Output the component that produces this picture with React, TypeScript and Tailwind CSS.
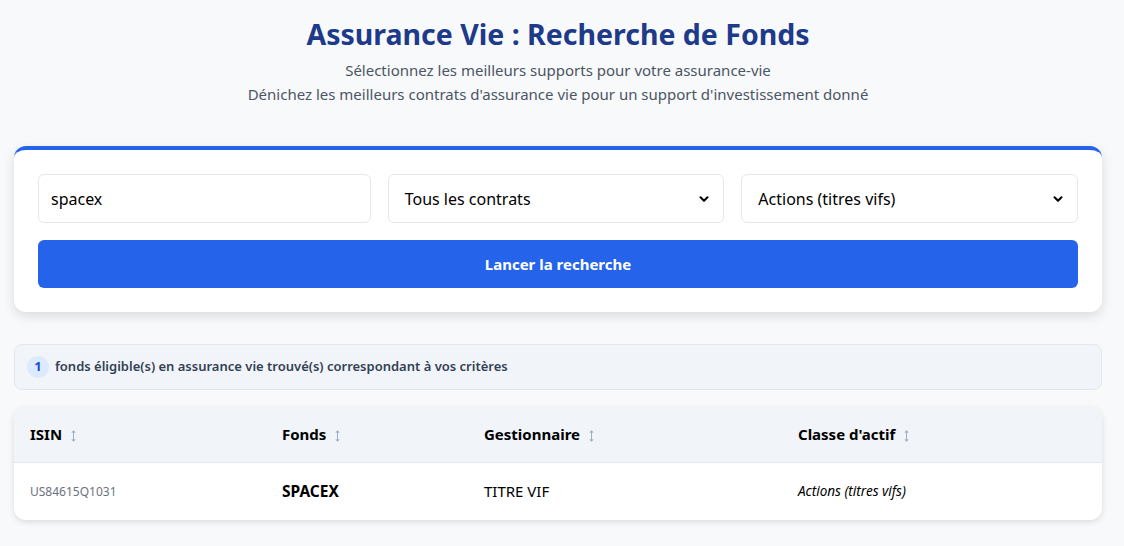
import { ChevronDown } from "lucide-react";

const font = { fontFamily: '"Noto Sans", "Open Sans", sans-serif' };

function SortIcon() {
  return (
    <svg viewBox="0 0 8 14" className="ml-2 inline-block h-[12px] w-[7px] text-[#a0aec0]" fill="none" stroke="currentColor" strokeWidth="1.2">
      <path d="M4 1v12M2 3l2-2 2 2M2 11l2 2 2-2" />
    </svg>
  );
}

function Select({ label }: { label: string }) {
  return (
    <div className="flex h-[49px] min-w-0 flex-1 basis-0 items-center justify-between rounded-md border border-[#e5e7eb] bg-white pl-[16px] pr-[12px] text-[16px] text-black">
      <span>{label}</span>
      <ChevronDown className="h-[14px] w-[14px]" strokeWidth={3.5} />
    </div>
  );
}

export default function App() {
  return (
    <div className="min-h-[546px] bg-[#f8f9fb]" style={font}>
      <div className="ml-[14px] w-[1088px] pt-[14px]">
        <h1 className="text-center text-[28.5px] font-bold leading-[40px] text-[#1e3a8a]">
          Assurance Vie : Recherche de Fonds
        </h1>
        <p className="mt-[4px] text-center text-[15px] leading-[24px] text-[#4b5563]">
          Sélectionnez les meilleurs supports pour votre assurance-vie
          <br />
          Dénichez les meilleurs contrats d'assurance vie pour un support d'investissement donné
        </p>

        <div className="mt-[40px] rounded-xl border-t-4 border-[#2563eb] bg-white px-6 pb-6 pt-6 shadow-[0_4px_12px_rgba(0,0,0,0.12)]">
          <div className="flex gap-[17px]">
            <div className="flex h-[49px] min-w-0 flex-1 basis-0 items-center rounded-md border border-[#e5e7eb] bg-white px-[12px] text-[16px] text-black">
              spacex
            </div>
            <Select label="Tous les contrats" />
            <Select label="Actions (titres vifs)" />
          </div>
          <button className="mt-[17px] flex h-[48px] w-full items-center justify-center rounded-md bg-[#2563eb] text-[15px] font-bold text-white">
            Lancer la recherche
          </button>
        </div>

        <div className="mt-[32px] flex h-[46px] items-center gap-[6px] rounded-lg border border-[#e2e8f0] bg-[#f1f5f9] px-[12px] text-[13px] font-semibold text-[#334155]">
          <span className="flex h-[22px] w-[22px] items-center justify-center rounded-full bg-[#dbeafe] text-[13px] font-bold text-[#1d4ed8]">
            1
          </span>
          fonds éligible(s) en assurance vie trouvé(s) correspondant à vos critères
        </div>

        <div className="mt-[17px] overflow-hidden rounded-xl bg-white shadow-[0_2px_6px_rgba(0,0,0,0.12)]">
          <div className="flex h-[56px] items-center border-b border-[#e2e8f0] bg-[#f1f5f9] text-[15px] font-bold text-black">
            <div className="w-[252px] pl-4">ISIN<SortIcon /></div>
            <div className="w-[202px] pl-4">Fonds<SortIcon /></div>
            <div className="w-[314px] pl-4">Gestionnaire<SortIcon /></div>
            <div className="flex-1 pl-4">Classe d'actif<SortIcon /></div>
          </div>
          <div className="flex h-[57px] items-center text-black">
            <div className="w-[252px] pl-4 text-[12px] text-[#6b7280]">US84615Q1031</div>
            <div className="w-[202px] pl-4 text-[15.5px] font-bold">SPACEX</div>
            <div className="w-[314px] pl-4 text-[15px]">TITRE VIF</div>
            <div className="flex-1 pl-4 text-[13.5px] italic">Actions (titres vifs)</div>
          </div>
        </div>
      </div>
    </div>
  );
}
